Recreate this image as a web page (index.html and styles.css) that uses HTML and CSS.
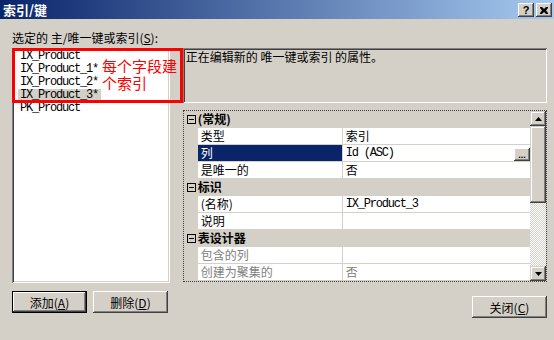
FILE: index.html
```html
<!DOCTYPE html>
<html lang="zh-CN">
<head>
    <meta charset="UTF-8">
    <title>索引/键</title>
    <link rel="stylesheet" href="styles.css">
</head>
<body>
    <div class="dialog">
        <div class="titlebar">
            <span class="title">索引/键</span>
            <div class="caption-btns">
                <span class="cap-btn">?</span>
                <span class="cap-btn">
                    <svg width="8" height="7" viewBox="0 0 8 7"><path d="M0 0h2l2 2 2-2h2v1l-2 2.5 2 2.5v1h-2l-2-2-2 2h-2v-1l2-2.5-2-2.5z" fill="#000"/></svg>
                </span>
            </div>
        </div>

        <div class="content">
            <div class="label">选定的 主/唯一键或索引(<u>S</u>):</div>

            <div class="main">
                <div class="left">
                    <ul class="index-list">
                        <li><span>IX_Product</span></li>
                        <li><span>IX_Product_1*</span></li>
                        <li><span>IX_Product_2*</span></li>
                        <li><span class="current">IX_Product_3*</span></li>
                        <li><span>PK_Product</span></li>
                    </ul>
                    <div class="note-box"></div>
                    <div class="note-text">
                        <div>每个字段建</div>
                        <div>个索引</div>
                    </div>
                </div>

                <div class="right">
                    <div class="desc">正在编辑新的 唯一键或索引 的属性。</div>

                    <div class="grid">
                        <div class="rows">
                            <div class="row head">
                                <span class="gutter"><svg class="toggle" width="9" height="9" viewBox="0 0 9 9"><rect x="0.5" y="0.5" width="8" height="8" fill="none" stroke="#000"/><path d="M2 4.5h5" stroke="#000"/></svg></span>
                                <span class="cat">(常规)</span>
                            </div>
                            <div class="row">
                                <span class="gutter"></span>
                                <span class="name">类型</span>
                                <span class="value">索引</span>
                            </div>
                            <div class="row">
                                <span class="gutter"></span>
                                <span class="name selected">列</span>
                                <span class="value"><span class="mono">Id (ASC)</span><span class="dots">...</span></span>
                            </div>
                            <div class="row">
                                <span class="gutter"></span>
                                <span class="name">是唯一的</span>
                                <span class="value">否</span>
                            </div>
                            <div class="row head">
                                <span class="gutter"><svg class="toggle" width="9" height="9" viewBox="0 0 9 9"><rect x="0.5" y="0.5" width="8" height="8" fill="none" stroke="#000"/><path d="M2 4.5h5" stroke="#000"/></svg></span>
                                <span class="cat">标识</span>
                            </div>
                            <div class="row">
                                <span class="gutter"></span>
                                <span class="name">(名称)</span>
                                <span class="value"><span class="mono">IX_Product_3</span></span>
                            </div>
                            <div class="row">
                                <span class="gutter"></span>
                                <span class="name">说明</span>
                                <span class="value"></span>
                            </div>
                            <div class="row head">
                                <span class="gutter"><svg class="toggle" width="9" height="9" viewBox="0 0 9 9"><rect x="0.5" y="0.5" width="8" height="8" fill="none" stroke="#000"/><path d="M2 4.5h5" stroke="#000"/></svg></span>
                                <span class="cat">表设计器</span>
                            </div>
                            <div class="row disabled">
                                <span class="gutter"></span>
                                <span class="name">包含的列</span>
                                <span class="value"></span>
                            </div>
                            <div class="row disabled">
                                <span class="gutter"></span>
                                <span class="name">创建为聚集的</span>
                                <span class="value">否</span>
                            </div>
                        </div>

                        <div class="scrollbar">
                            <div class="sb-btn"><svg width="7" height="4" viewBox="0 0 7 4"><path d="M3.5 0L7 4H0z" fill="#000"/></svg></div>
                            <div class="sb-thumb"></div>
                            <div class="sb-track"></div>
                            <div class="sb-btn"><svg width="7" height="4" viewBox="0 0 7 4"><path d="M0 0h7L3.5 4z" fill="#000"/></svg></div>
                        </div>
                    </div>
                </div>
            </div>

            <div class="buttons">
                <button class="btn default">添加(<u>A</u>)</button>
                <button class="btn">删除(<u>D</u>)</button>
                <button class="btn close">关闭(<u>C</u>)</button>
            </div>
        </div>
    </div>
</body>
</html>
```

FILE: styles.css
```css
* {
    box-sizing: border-box;
}

body {
    margin: 0;
    background-color: #d4d0c8;
    font-family: "Noto Sans CJK SC", sans-serif;
    font-size: 12px;
    color: #000;
}

.dialog {
    width: 554px;
    height: 340px;
    overflow: hidden;
    background-color: #d4d0c8;
}

.titlebar {
    height: 19px;
    display: flex;
    align-items: flex-start;
    padding-left: 3px;
    background: linear-gradient(to right, #0a246a, #a6caf0);
}

.title {
    flex: 1;
    color: #fff;
    font-weight: bold;
    font-size: 13px;
    line-height: 19px;
}

.caption-btns {
    display: flex;
    gap: 2px;
    margin: 3px 2px 0 0;
}

.cap-btn {
    width: 16px;
    height: 14px;
    display: flex;
    align-items: center;
    justify-content: center;
    background: #d4d0c8;
    font: bold 11px "Liberation Sans", sans-serif;
    box-shadow: inset -1px -1px #404040, inset 1px 1px #fff, inset -2px -2px #808080, inset 2px 2px #d4d0c8;
}

.content {
    padding: 12px 7px 0 12px;
}

.label {
    height: 14px;
    line-height: 14px;
}

.main {
    display: flex;
    gap: 13px;
    margin-top: 3px;
}

/* left list of indexes */
.left {
    position: relative;
    width: 158px;
    height: 235px;
}

.index-list {
    list-style: none;
    margin: 0;
    height: 100%;
    padding: 2px 0 0 6px;
    background: #fff;
    box-shadow: inset 1px 1px #808080, inset -1px -1px #fff, inset 2px 2px #404040, inset -2px -2px #d4d0c8;
}

.index-list li {
    height: 13px;
    line-height: 13px;
    font-family: "Liberation Mono", monospace;
    font-size: 12px;
    letter-spacing: -1.2px;
}

.index-list span {
    display: inline-block;
    padding: 0 3px 0 2px;
}

.index-list .current {
    background: #d4d0c8;
}

.note-box {
    position: absolute;
    left: 0;
    top: 0;
    width: 171px;
    height: 55px;
    border: 3px solid #ff0000;
}

.note-text {
    position: absolute;
    left: 90px;
    top: 9px;
    white-space: nowrap;
    color: #ff0000;
    font-size: 15px;
    line-height: 17px;
}

/* right side */
.right {
    width: 365px;
}

.desc {
    height: 55px;
    padding: 2px 0 0 3px;
    line-height: 13px;
    box-shadow: inset 1px 1px #808080, inset -1px -1px #fff, inset 2px 2px #404040, inset -2px -2px #d4d0c8;
}

.grid {
    display: flex;
    margin-top: 7px;
    border: 1px dotted #404040;
}

.rows {
    flex: 1;
}

.row {
    display: flex;
    height: 17px;
    line-height: 16px;
}

.gutter {
    width: 14px;
    flex-shrink: 0;
    background: #d4d0c8;
    padding: 4px 0 0 3px;
}

.toggle {
    display: block;
}

.cat {
    flex: 1;
    background: #d4d0c8;
    font-weight: bold;
}

.name {
    width: 145px;
    padding-left: 3px;
    background: #fff;
    border-right: 1px solid #d4d0c8;
    border-bottom: 1px solid #d4d0c8;
}

.name.selected {
    background: #0a246a;
    color: #fff;
}

.value {
    flex: 1;
    display: flex;
    padding-left: 3px;
    background: #fff;
    border-bottom: 1px solid #d4d0c8;
}

.disabled {
    color: #808080;
}

.mono {
    font-family: "Liberation Mono", monospace;
    font-size: 12px;
    letter-spacing: -1.2px;
}

.dots {
    width: 16px;
    height: 13px;
    margin-left: auto;
    align-self: flex-end;
    background: #d4d0c8;
    font: bold 9px/14px "Liberation Sans", sans-serif;
    text-align: center;
    box-shadow: inset -1px -1px #404040, inset 1px 1px #fff, inset -2px -2px #808080;
}

.scrollbar {
    width: 16px;
    display: flex;
    flex-direction: column;
}

.sb-btn {
    height: 15px;
    display: flex;
    align-items: center;
    justify-content: center;
    background: #d4d0c8;
    box-shadow: inset -1px -1px #404040, inset 1px 1px #d4d0c8, inset -2px -2px #808080, inset 2px 2px #fff;
}

.sb-thumb {
    height: 77px;
    background: #d4d0c8;
    box-shadow: inset -1px -1px #404040, inset 1px 1px #d4d0c8, inset -2px -2px #808080, inset 2px 2px #fff;
}

.sb-track {
    flex: 1;
    background: repeating-conic-gradient(#fff 0 25%, #d4d0c8 0 50%) 0 0 / 2px 2px;
}

/* bottom buttons */
.buttons {
    display: flex;
    align-items: flex-start;
    gap: 6px;
    margin-top: 8px;
}

.btn {
    width: 75px;
    height: 22px;
    padding: 0;
    border: none;
    background: #d4d0c8;
    font-family: "Noto Sans CJK SC", sans-serif;
    font-size: 12px;
    color: #000;
    box-shadow: inset -1px -1px #404040, inset 1px 1px #fff, inset -2px -2px #808080, inset 2px 2px #d4d0c8;
}

.btn.default {
    border: 1px solid #000;
    box-shadow: inset -1px -1px #404040, inset 1px 1px #fff, inset -2px -2px #808080;
}

.btn.close {
    margin: 5px 0 0 auto;
}
```
